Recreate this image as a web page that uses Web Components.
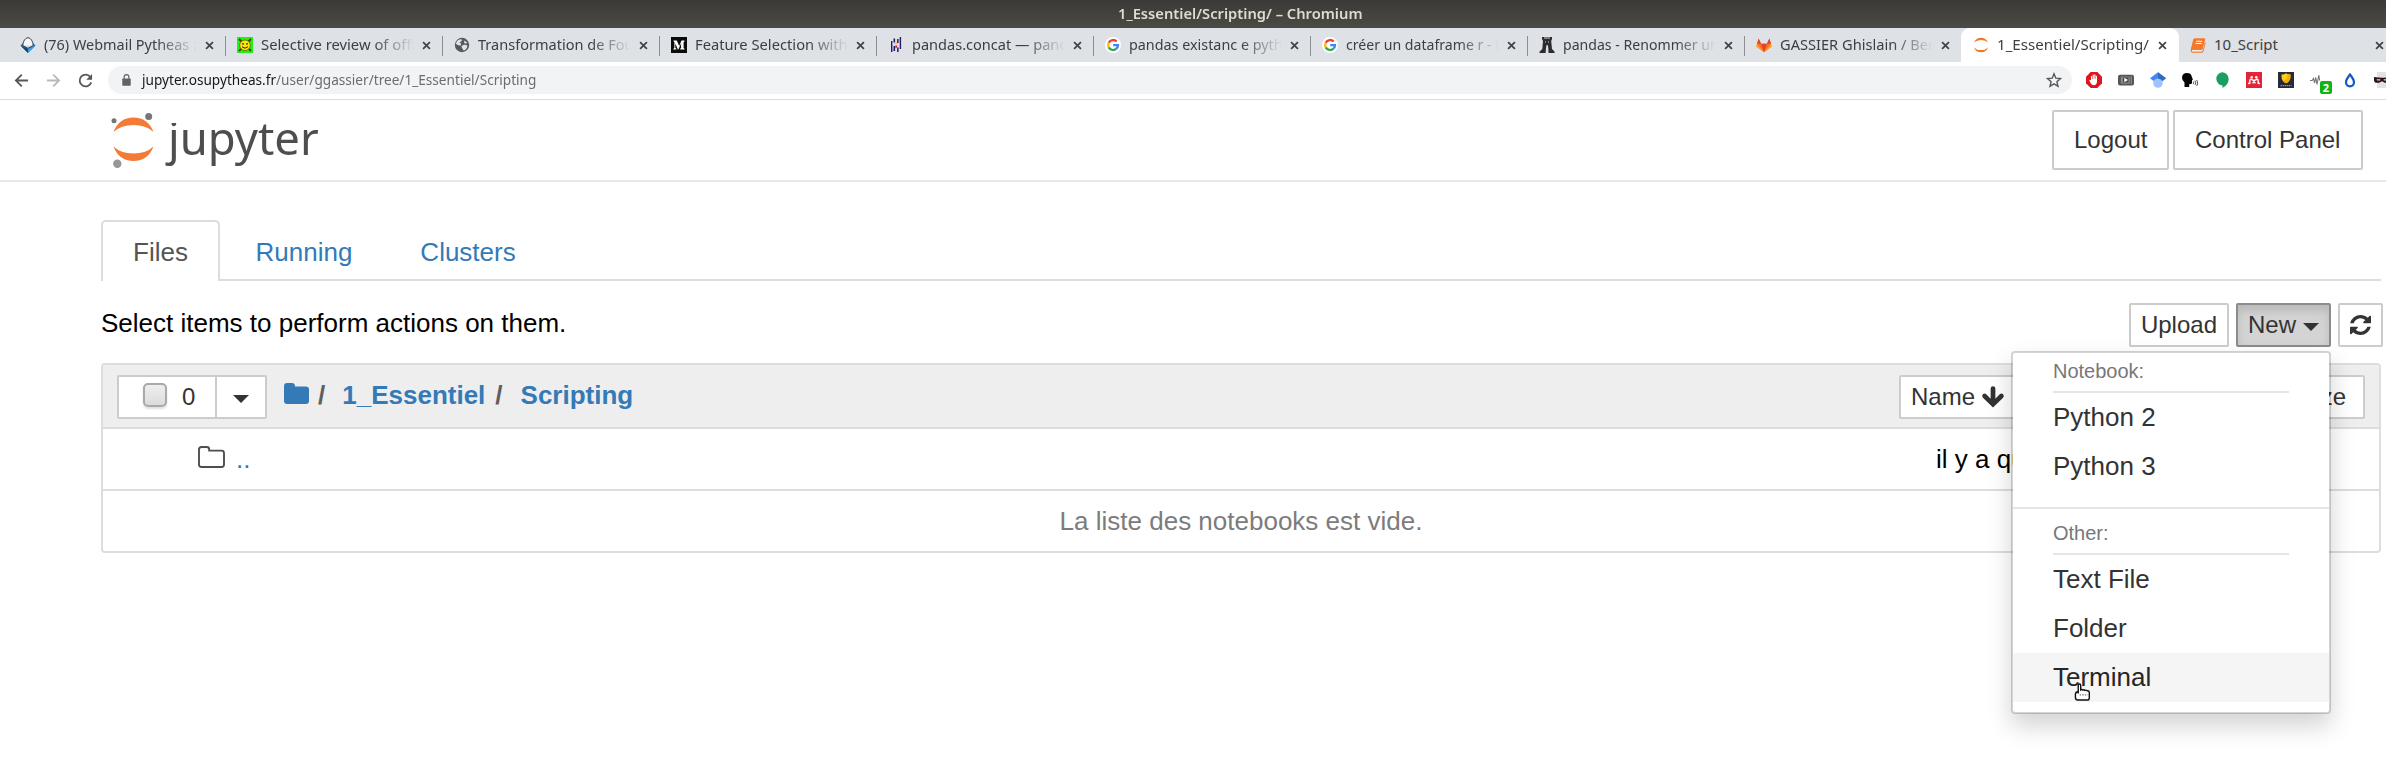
<!DOCTYPE html>
<html lang="fr">
<head>
<meta charset="utf-8">
<title>1_Essentiel/Scripting/</title>
<style>
html,body{margin:0;padding:0;background:#fff}
body{width:2386px;height:761px;overflow:hidden;font-family:"Liberation Sans",Arial,sans-serif}
</style>
</head>
<body>
<browser-window></browser-window>
<script>
const define = (name, html, init) => {
  const t = document.createElement('template');
  t.innerHTML = html;
  customElements.define(name, class extends HTMLElement {
    connectedCallback() {
      if (this.shadowRoot) return;
      this.attachShadow({mode: 'open'}).append(t.content.cloneNode(true));
      if (init) init.call(this, this.shadowRoot);
    }
  });
};

/* Icon library: name -> [viewBox, markup] */
const googleG = '<circle cx="8" cy="8" r="8" fill="#fff"/><g fill="none" stroke-width="2.3"><path d="M11.7 4.6A4.9 4.9 0 0 0 3.7 5.7" stroke="#ea4335"/><path d="M3.7 5.7a4.9 4.9 0 0 0 0 4.7" stroke="#fbbc05"/><path d="M3.7 10.4a4.9 4.9 0 0 0 7.7 1.3" stroke="#34a853"/><path d="M11.4 11.7A4.9 4.9 0 0 0 13 8.2H8.2" stroke="#4285f4"/></g>';
const ICONS = {
  webmail: ['0 0 16 16', '<path d="M.5 8.500L8 16l7.500-7.500L12 5H4z" fill="#2277c4"/><path d="M.5 8.500L8 12v4z" fill="#173f70"/><path d="M15.500 8.500L8 12v4z" fill="#3aa0e4"/><path d="M8 .6Q12.500 1.500 13.300 8.500L8 11.200 2.700 8.500Q3.500 1.500 8 .6z" fill="#f4f5f7" stroke="#3d4247" stroke-width="1"/><path d="M3.300 7.500Q8 10 12.700 7.500L8 10.500z" fill="#cdd5de"/>'],
  smiley: ['0 0 16 16', '<path d="M0 0h16v16H0z" fill="#1df21d"/><path d="M2 2l12 12M14 2L2 14" stroke="#5b3a12" stroke-width="2"/><circle cx="8" cy="8.3" r="5.3" fill="#ffe600" stroke="#6b5a00" stroke-width=".8"/><circle cx="6" cy="6.8" r=".9" fill="#222"/><circle cx="10" cy="6.8" r=".9" fill="#222"/><path d="M5 9.7q3 3 6 0" fill="none" stroke="#222" stroke-width="1"/>'],
  globe: ['0 0 16 16', '<circle cx="8" cy="8" r="7.200" fill="#55585d"/><path d="M3.800 3.200Q7 1.600 8.300 2.800 7.300 5 5.500 5.300 7.600 6.500 7 8.200 4.500 9 2 7 2 5 3.800 3.200zM9 8q3-1 4.500.7-.8 4-4 4.800Q8 11 7.400 9.500zM10.300 3.500l2.800 2-.4 1.100-2.600-.4z" fill="#dee1e6"/>'],
  medium: ['0 0 16 16', '<path d="M0 0h16v16H0z" fill="#0b0b0b"/><path d="M2.600 3.600h3.200L8.200 9l2.300-5.400h3v.8l-.9.7v6l.9.7v.8H9.200v-.8l.9-.7V6.200L7.400 12.600h-.5L4.300 6.600v4.200l1.100 1.100v.7h-3v-.7l1-1.100V5.200l-.9-.9z" fill="#fff"/>'],
  pandas: ['0 0 16 16', '<g fill="#2a1a66"><path d="M3 4h1.400v11H3zM5.500 1.500h1.600v4H5.500zM5.500 9h1.600v5H5.500zM11.700 0h1.400v12h-1.400zM9.100 2h1.500v4H9.100zM9.100 10.500h1.500V15H9.100z"/></g><path d="M7.300 5.500h1.700v2H7.300z" fill="#ffca00"/><path d="M7.300 8.500h1.700v2.200H7.300z" fill="#e70488"/>'],
  google: ['0 0 16 16', googleG],
  boots: ['0 0 16 16', '<path d="M3 0h10v2l-.8 2 .8 8 2.500 2.500V16H9.500l-.2-5-.6-3H7.600L7 11l-.4 5H.5v-1.300L3.300 12 4 4l-1-2z" fill="#2b2c2e"/><path d="M5 1h6M6.500 4.500v1M9.500 4.500v1" stroke="#dee1e6" stroke-width=".9"/>'],
  gitlab: ['0 0 16 16', '<path d="M8 15.200L.3 9.500 2.600 1.500 5.100 6.800h5.800l2.500-5.300 2.300 8z" fill="#fc6d26"/><path d="M8 15.200L5.100 6.800h5.800z" fill="#e24329"/><path d="M8 15.200L.3 9.500l.8-2.700z M8 15.200l7.700-5.700-.8-2.700z" fill="#fca326"/><path d="M2.600 1.500L1.100 6.800h4zM13.400 1.500l1.500 5.300h-4z" fill="#e24329"/>'],
  crescents: ['0 0 16 16', '<path d="M1 5.600Q3 .7 8 .7t7 4.900Q12.500 2.900 8 2.900T1 5.600zM1 10.400Q3 15.300 8 15.300t7-4.900Q12.500 13.100 8 13.100T1 10.400z" fill="#f37726"/>'],
  book: ['0 0 16 16', '<path d="M5 1.300h9.500q1 .2.700 1.400L12.600 12q-.3 1-1.400 1H2.900q-1 0-1 .7t1 .7h8.700q.9 0 1.200-1l2.300-8.500q.8.500.5 1.500l-2.200 8q-.4 1.300-1.800 1.300H2.700Q.7 15.500.6 13.300L3.500 2.500Q3.900 1.300 5 1.300z" fill="#f5792a"/><path d="M3.300 2h11.500l-3 11H1z" fill="#f5792a"/><path d="M6.200 4.300h6M5.600 6.500h6" stroke="#fff" stroke-width="1"/><path d="M2 13.800h9.700" stroke="#fff" stroke-width=".7"/>'],
  close: ['0 0 10 10', '<path d="M1.200 1.200l7.600 7.600M8.800 1.200L1.200 8.800" stroke="#3f4246" stroke-width="1.900"/>'],
  back: ['0 0 16 16', '<path d="M15 8H2.500M8.300 1.800L2 8l6.300 6.200" fill="none" stroke="#54575c" stroke-width="1.900"/>'],
  forward: ['0 0 16 16', '<path d="M1 8h12.500M7.700 1.800L14 8l-6.300 6.200" fill="none" stroke="#b7b9bc" stroke-width="1.900"/>'],
  reload: ['0 0 16 16', '<path d="M13.400 4.600A6.300 6.300 0 1 0 14.100 10" fill="none" stroke="#54575c" stroke-width="1.900"/><path d="M15 1v6.200H8.800z" fill="#54575c"/>'],
  lock: ['0 0 10 13', '<path d="M1 5h8q.7 0 .7.700V12q0 .8-.7.800H1q-.700 0-.700-.800V5.700Q.3 5 1 5z" fill="#5f6368"/><path d="M2.400 5.500V3.300a2.600 2.600 0 0 1 5.200 0v2.200" fill="none" stroke="#5f6368" stroke-width="1.300"/>'],
  star: ['0 0 16 16', '<path d="M8 1.800l1.800 4.400 4.700.4-3.600 3.100 1.100 4.600L8 11.800l-4 2.500 1.100-4.600L1.500 6.600l4.700-.4z" fill="none" stroke="#54575c" stroke-width="1.400"/>'],
  adblock: ['0 0 16 16', '<path d="M4.700 0h6.600L16 4.700v6.600L11.300 16H4.700L0 11.300V4.700z" fill="#e0161f"/><path d="M5 4.200q.7-.6 1.100.1V7h.5V3q.6-.8 1.200 0v3.800h.5V2.600q.7-.7 1.200.1v4.200h.4V4q.7-.6 1.100.2v5.600q-.3 3.400-3.200 3.500-2 0-3.100-2L3.300 8.300q.5-1 1.700 0z" fill="#fff"/>'],
  player: ['0 0 16 16', '<rect x="0" y="2.700" width="16" height="10.800" rx="2" fill="#555"/><rect x="2.800" y="4.500" width="9" height="7.200" rx="1" fill="#888"/><rect x="5" y="5.500" width="5.500" height="5" fill="#444"/><path d="M6.300 5.800L10 8l-3.700 2.200z" fill="#fff"/><path d="M13.200 4v8" stroke="#aaa" stroke-width=".8"/>'],
  scholar: ['0 0 16 16', '<circle cx="8" cy="11" r="4.800" fill="#a0c3ff"/><path d="M8 .2L16 6.200 12.500 9Q11 6.500 8 6.500T3.500 9L0 6.200z" fill="#4285f4"/><path d="M8 .2l8 6L12.500 9Q11 6.500 8 6.500z" fill="#356ac3"/>'],
  speak: ['0 0 16 16', '<path d="M2.500 15v-4.500Q0 8.500 0 5.700 0 1 5 1q4.500 0 4.900 4.300L11 7.600l-.9.500-.1 3Q9.800 12.300 8.400 12l-1.200.2V15z" fill="#050505"/><path d="M11.300 9.500q.8 1.300 0 2.600M13 8.600q1.400 2.200 0 4.400M14.800 8q1.700 3 0 6" fill="none" stroke="#444" stroke-width=".9"/>'],
  hangouts: ['0 0 16 16', '<path d="M8 .2a6.700 6.700 0 0 1 6.700 6.700Q14.700 12.300 8.500 16v-2.500A6.700 6.700 0 0 1 8 .2z" fill="#1a9f60"/>'],
  mendeley: ['0 0 16 16', '<path d="M0 0h16v16H0z" fill="#e52437"/><path d="M2 11.500l1.800-.2V8.500Q4 7 5.300 7.300L8 8.700l2.700-1.400Q12 7 12.200 8.500v2.800l1.800.2M6.600 11.300q1.400-2.600 2.800 0" fill="none" stroke="#fff" stroke-width="1.400"/><circle cx="5.700" cy="5.300" r="1.300" fill="#fff"/><circle cx="10.300" cy="5.300" r="1.300" fill="#fff"/>'],
  shield: ['0 0 16 16', '<path d="M0 0h16v16H0z" fill="#252b3a"/><path d="M3.600 2.500Q6 2.800 8 1.300q2 1.500 4.400 1.200Q13.200 9 8 11.200 2.800 9 3.600 2.500z" fill="#ffd012"/><path d="M5 9q4-1 5-7l2.400.5Q13.200 9 8 11.200z" fill="#f5ae00"/><path d="M2.500 13.700h11" stroke="#9a9a9a" stroke-width="1.200" stroke-dasharray="1.500 .6"/>'],
  pulse: ['0 0 16 16', '<path d="M0 8.500h2.200L3.500 6.500l1 4.500L5.800 5.500l1.200 7L8.800 3l.8 5.500" fill="none" stroke="#777" stroke-width="1.100"/>'],
  drop: ['0 0 16 16', '<path d="M8 2.500q4 5 4 7.800a4 4 0 0 1-8 0Q4 7.500 8 2.500z" fill="#fff" stroke="#1457c8" stroke-width="2.200"/>'],
  mask: ['0 0 16 16', '<path d="M3 0h10v16H3z" fill="#e3e3e3"/><path d="M0 5q8 1.600 16 0v3.500q-1 3-5 2.200L8 9.200l-3 1.500Q0 11.500 0 8z" fill="#2c1114"/><path d="M2.500 7.300h3.800v1.200H3.200zM9.700 7.300h3.800l-.7 1.200H9.700z" fill="#ddd"/>'],
  caret: ['0 0 16 8', '<path d="M0 0h16L8 8z" fill="currentColor"/>'],
  refresh: ['0 0 1536 1536', '<path d="M1511 928q0 5-1 7-64 268-268 434.500T764 1536q-146 0-282.500-55T238 1324l-129 129q-19 19-45 19t-45-19-19-45V960q0-26 19-45t45-19h448q26 0 45 19t19 45-19 45l-137 137q71 66 161 102t187 36q134 0 250-65t186-179q11-17 53-117 8-23 30-23h192q13 0 22.500 9.500t9.500 22.500zm25-800v448q0 26-19 45t-45 19h-448q-26 0-45-19t-19-45 19-45l138-138Q969 256 768 256q-134 0-250 65T332 500q-11 17-53 117-8 23-30 23H50q-13 0-22.500-9.500T18 608v-7q65-268 270-434.500T768 0q146 0 284 55.500T1297 212l130-129q19-19 45-19t45 19 19 45z" fill="currentColor"/>'],
  arrow: ['0 0 22 21', '<path d="M2.600 10L11 18.300 19.400 10M11 18V2.500" fill="none" stroke="currentColor" stroke-width="4.700" stroke-linecap="round" stroke-linejoin="miter"/>'],
  folder: ['0 0 25 21', '<path d="M0 3.200Q0 0 3.200 0h4.600Q11 0 11 3v.4h10.800q3.200 0 3.200 3.200v11.200q0 3.200-3.200 3.200H3.200Q0 21 0 17.800z" fill="currentColor"/>'],
  folderopen: ['0 0 27 22', '<path d="M1 3.500Q1 1 3.500 1h5.200q2.500 0 2.500 2.500v1.100h12.300q2.500 0 2.500 2.500v11.400q0 2.500-2.500 2.500h-20Q1 21 1 18.500z" fill="none" stroke="currentColor" stroke-width="1.900"/>'],
  logo: ['0 0 48 58', '<path d="M4.500 21Q10 6.400 24.500 6.400T44.500 21Q37 14 24.500 14T4.500 21zM4.500 35.500Q10 50 24.500 50T44.500 35.500Q37 42.500 24.500 42.500T4.500 35.500z" fill="#f37b35"/><circle cx="5" cy="9.700" r="2.500" fill="#767677"/><circle cx="39.700" cy="5.400" r="3.500" fill="#767677"/><circle cx="8.300" cy="52.700" r="4.200" fill="#989798"/>'],
  hand: ['0 0 18 19', '<path d="M4.500 11V2.600q0-1.500 1.300-1.500t1.300 1.500v4.600q1.200-.8 2.200.3 1.200-.8 2.300.3 1.300-.7 2.300.4 1.900-.3 2.300 1.500v5.800q0 2.500-2 2.500H4q-2.500 0-2.500-3v-3.200Q1.700 9.500 4.500 9z" fill="#fff" stroke="#111" stroke-width="1.500"/><path d="M6 12.500h8.500" stroke="#777" stroke-width="1.500" stroke-dasharray="1.500 1.200"/>']
};
define('ui-icon', '<style>:host{display:block;flex:none}svg{display:block;width:100%;height:100%;overflow:visible}</style><svg></svg>', function (r) {
  const [box, art] = ICONS[this.getAttribute('name')];
  const svg = r.querySelector('svg');
  svg.setAttribute('viewBox', box);
  svg.setAttribute('preserveAspectRatio', 'none');
  svg.innerHTML = art;
  const w = this.getAttribute('w') || 16;
  this.style.width = w + 'px';
  this.style.height = (this.getAttribute('h') || w) + 'px';
});

/* Sets its text to a given advance width, condensing the letters horizontally */
define('fit-text', '<style>:host{display:block;white-space:nowrap;flex:none}span{display:inline-block;transform-origin:0 50%}</style><span><slot></slot></span>', function (r) {
  const s = r.querySelector('span');
  const w = +this.getAttribute('w');
  s.style.transform = `scaleX(${w / s.offsetWidth})`;
  this.style.width = w + 'px';
});

define('title-bar', `<style>:host{display:flex;height:28px;background:linear-gradient(#3b3a36,#4b4a44);color:#dfdbd2;font:600 15px/27px "Noto Sans",sans-serif;padding-left:1118px;box-sizing:border-box}</style><fit-text w="245"><slot></slot></fit-text>`);

define('browser-tab', `<style>:host{display:flex;align-items:center;position:relative;width:217px;height:34px;box-sizing:border-box;padding-left:11px;flex:none;color:#3c4043;font:15px/32px "Noto Sans",sans-serif}
:host([sep]){background:linear-gradient(#8a8d91,#8a8d91) 216px 8px/1px 20px no-repeat}
:host([active]){background:#fff;border-radius:9px 9px 0 0;margin-left:-1px;padding-left:12px;width:218px}
div{width:153px;margin-left:8px;overflow:hidden;height:34px}
:host([fade]) div{-webkit-mask:linear-gradient(90deg,#000 112px,transparent 153px)}
.x{margin-left:8px}</style><span class="i"></span><div></div><ui-icon class="x" name="close" w="9"></ui-icon>`, function (r) {
  r.querySelector('.i').innerHTML = `<ui-icon name="${this.getAttribute('icon')}"></ui-icon>`;
  r.querySelector('div').innerHTML = `<fit-text w="${this.getAttribute('w')}"><slot></slot></fit-text>`;
});

define('tab-strip', `<style>:host{display:flex;height:34px;background:#dee1e6;padding-left:9px;overflow:hidden}</style>
<browser-tab icon="webmail" w="153" sep fade>(76) Webmail Pytheas :</browser-tab>
<browser-tab icon="smiley" w="154" sep fade>Selective review of offl</browser-tab>
<browser-tab icon="globe" w="155" sep fade>Transformation de Fou</browser-tab>
<browser-tab icon="medium" w="153" sep fade>Feature Selection with</browser-tab>
<browser-tab icon="pandas" w="156" sep fade>pandas.concat — pand</browser-tab>
<browser-tab icon="google" w="154" sep fade>pandas existanc e pyth</browser-tab>
<browser-tab icon="google" w="158" sep fade>créer un dataframe r - R</browser-tab>
<browser-tab icon="boots" w="156" sep fade>pandas - Renommer un</browser-tab>
<browser-tab icon="gitlab" w="154" fade>GASSIER Ghislain / Ber</browser-tab>
<browser-tab icon="crescents" w="152" active>1_Essentiel/Scripting/</browser-tab>
<browser-tab icon="book" w="64">10_Script</browser-tab>`);

define('address-bar', `<style>:host{display:flex;align-items:center;height:36px;padding-bottom:1px;border-bottom:1px solid #dcdcdd;background:#fff;box-sizing:content-box;overflow:hidden;font:15px/26px "Noto Sans",sans-serif}
.nav{display:flex;gap:17px;width:94px;padding-left:14px;flex:none}
.box{display:flex;align-items:center;width:1964px;height:28px;border-radius:14px;background:#f1f3f4;box-sizing:border-box;padding:0 10px 0 14px;flex:none}
.url{color:#6a6d71;margin-left:11px;flex:1;height:28px}.url b{font-weight:400;color:#17181a}
.ext{display:flex;gap:16px;padding-left:14px}
.badge{position:relative}.badge span{position:absolute;left:10px;top:9px;width:12px;height:13px;border-radius:2px;background:#12b312;color:#fff;font:bold 11px/13px "Noto Sans",sans-serif;text-align:center}</style>
<div class="nav"><ui-icon name="back" w="15"></ui-icon><ui-icon name="forward" w="15"></ui-icon><ui-icon name="reload" w="15"></ui-icon></div>
<div class="box"><ui-icon name="lock" w="9" h="12"></ui-icon><div class="url"><fit-text w="394"><b>jupyter.osupytheas.fr</b>/user/ggassier/tree/1_Essentiel/Scripting</fit-text></div><ui-icon name="star"></ui-icon></div>
<div class="ext"><ui-icon name="adblock"></ui-icon><ui-icon name="player"></ui-icon><ui-icon name="scholar"></ui-icon><ui-icon name="speak"></ui-icon><ui-icon name="hangouts"></ui-icon><ui-icon name="mendeley"></ui-icon><ui-icon name="shield"></ui-icon><div class="badge"><ui-icon name="pulse"></ui-icon><span>2</span></div><ui-icon name="drop"></ui-icon><ui-icon name="mask"></ui-icon></div>`);

define('ui-button', `<style>:host{display:flex;align-items:center;box-sizing:border-box;height:44px;padding:0 10px;border:2px solid #ccc;border-radius:2px;background:#fff;color:#333;font-size:24px;line-height:36px;white-space:nowrap;flex:none}
:host([large]){height:60px;padding:0 20px}
:host([pressed]){background:#d4d4d4;border-color:#8c8c8c;box-shadow:inset 0 6px 10px rgba(0,0,0,.125)}</style><slot></slot>`);

define('jupyter-header', `<style>:host{display:flex;height:80px;border-bottom:2px solid #e7e7e7;padding-left:109px;padding-right:23px;justify-content:space-between;box-sizing:content-box}
.logo{display:flex;padding-top:11px}
.word{position:relative;height:66px;margin:-2px 0 0 11px;color:#4e4e4e;font:46px/56px "Noto Sans",sans-serif}
/* the wordmark's j carries no dot */
.word::after{content:"";position:absolute;left:-3px;top:0;width:18px;height:14px;background:#fff}
.actions{display:flex;gap:4px;padding-top:10px}</style>
<div class="logo"><ui-icon name="logo" w="48" h="58"></ui-icon><div class="word"><fit-text w="151">jupyter</fit-text></div></div>
<div class="actions"><ui-button large style="width:117px">Logout</ui-button><ui-button large style="width:190px">Control Panel</ui-button></div>`);

define('nav-tabs', `<style>:host{display:flex;gap:4px;height:59px;border-bottom:2px solid #ddd;font-size:26px;line-height:60px;color:#337ab7}
span{padding:2px 32px 0}
.on{color:#555;background:#fff;border:2px solid #ddd;border-bottom:0;border-radius:5px 5px 0 0;padding:0 30px;height:59px;width:54.5px;position:relative}</style>
<span class="on">Files</span><span>Running</span><span>Clusters</span>`);

define('list-toolbar', `<style>:host{display:flex;justify-content:space-between;height:82px;font-size:26px;line-height:36px;color:#000}
p{margin:24px 0 0}div{display:flex;gap:7px;padding-top:22px;margin-right:-2px}</style>
<p>Select items to perform actions on them.</p>
<div><ui-button>Upload</ui-button><ui-button pressed>New<ui-icon name="caret" w="16" h="8" style="margin:3px 0 0 7px"></ui-icon></ui-button><ui-button><ui-icon name="refresh" w="21" h="20"></ui-icon></ui-button></div>`);

define('select-all', `<style>:host{display:flex;box-sizing:border-box;width:150px;height:44px;border:2px solid #ccc;border-radius:2px;background:#fff;color:#333;font-size:24px;line-height:40px}
.n{display:flex;width:96px;border-right:2px solid #ccc}
i{width:24px;height:24px;box-sizing:border-box;margin:6px 15px 0 24px;border:2px solid #a9a9a9;border-radius:5px;background:linear-gradient(#eee,#dcdcdc);box-shadow:0 2px 2px rgba(0,0,0,.12)}
ui-icon{margin:18px 0 0 16px}</style>
<div class="n"><i></i>0</div><ui-icon name="caret" w="16" h="8"></ui-icon>`);

define('file-list', `<style>:host{display:block;border:2px solid #ddd;border-radius:4px;font-size:26px;overflow:hidden}
.head{display:flex;justify-content:space-between;height:62px;background:#eee;border-bottom:2px solid #ddd;padding:0 14px}
.left,.right{display:flex;padding-top:10px}
.crumbs{display:flex;font-weight:bold;color:#5e5e5e;line-height:40px;margin-left:17px}
.crumbs ui-icon{color:#337ab7;margin-top:8px}a{color:#337ab7}
.crumbs span{margin:0 17px 0 9px}.crumbs span+a+span{margin:0 18px 0 10px}
.row{display:flex;height:60px;line-height:60px;border-bottom:2px solid #ddd;justify-content:space-between;padding-left:95px}
.up{display:flex;color:#4e4e4e}.up ui-icon{margin:17px 11px 0 0}.date{width:443px;color:#000;white-space:nowrap}
.empty{height:60px;line-height:60px;text-align:center;color:#7c7c7c}</style>
<div class="head"><div class="left"><select-all></select-all><div class="crumbs"><ui-icon name="folder" w="25" h="21"></ui-icon><span>/</span><a>1_Essentiel</a><span>/</span><a>Scripting</a></div></div>
<div class="right"><ui-button style="width:160px">Name<ui-icon name="arrow" w="22" h="21" style="margin-left:7px;margin-top:-2px"></ui-icon></ui-button><ui-button style="width:158px"></ui-button><ui-button style="width:148px;justify-content:flex-end;padding-right:17px">File size</ui-button></div></div>
<div class="row"><div class="up"><ui-icon name="folderopen" w="27" h="22"></ui-icon><a>..</a></div><div class="date">il y a qu</div></div>
<div class="empty">La liste des notebooks est vide.</div>`);

define('menu-group', `<style>:host{display:block}div{margin:0 40px;height:38px;border-bottom:2px solid #e5e5e5;color:#777;font-size:20px;line-height:36px}</style><div></div><slot></slot>`, function (r) {
  r.querySelector('div').textContent = this.getAttribute('label');
});
define('menu-item', `<style>:host{display:block;height:49px;line-height:49px;padding-left:40px;color:#333;font-size:26px}:host([hover]){background:#f5f5f5;color:#262626}</style><slot></slot>`);
define('new-menu', `<style>:host{position:absolute;left:2011px;top:351px;width:320px;height:363px;box-sizing:border-box;background:#fff;background-clip:padding-box;border:2px solid rgba(0,0,0,.17);border-radius:4px;box-shadow:0 12px 24px rgba(0,0,0,.175)}
hr{margin:16px 0 6px;border:0;height:2px;background:#e5e5e5}
.cur{position:absolute;left:61px;top:330px}</style>
<menu-group label="Notebook:"><menu-item>Python 2</menu-item><menu-item>Python 3</menu-item></menu-group><hr>
<menu-group label="Other:"><menu-item>Text File</menu-item><menu-item>Folder</menu-item><menu-item hover>Terminal</menu-item></menu-group>
<ui-icon class="cur" name="hand" w="17" h="18"></ui-icon>`);

define('browser-window', `<style>:host{display:block;width:2386px;height:761px;position:relative;overflow:hidden}
main{padding:38px 5px 0 101px}</style>
<title-bar>1_Essentiel/Scripting/ – Chromium</title-bar><tab-strip></tab-strip><address-bar></address-bar>
<jupyter-header></jupyter-header>
<main><nav-tabs></nav-tabs><list-toolbar></list-toolbar><file-list></file-list></main>
<new-menu></new-menu>`);
</script>
</body>
</html>
